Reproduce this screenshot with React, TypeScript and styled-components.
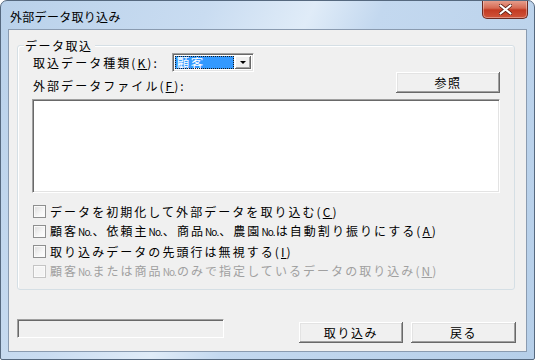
import React from 'react'
import styled, { createGlobalStyle } from 'styled-components'

const Global = createGlobalStyle`
    html, body {
        margin: 0;
        padding: 0;
        background: #ffffff;
    }
    body {
        font-family: "Noto Sans CJK JP", "Liberation Sans", sans-serif;
        font-size: 12px;
    }
`

const Window = styled.div`
    width: 535px;
    height: 360px;
    box-sizing: border-box;
    border: 1px solid #56697f;
    border-radius: 7px 7px 2px 2px;
    background: linear-gradient(115deg, #b9d1ea 0%, #c9dcf1 30%, #e0ecf8 45%, #c3d8ef 55%, #b6cfe9 100%);
    display: flex;
    flex-direction: column;
    overflow: hidden;
`

const TitleBar = styled.div`
    height: 28px;
    display: flex;
    align-items: flex-start;
    justify-content: space-between;
`

const Title = styled.div`
    padding: 8px 0 0 9px;
    font-size: 12px;
    line-height: 16px;
    letter-spacing: 0.3px;
    color: #000;
`

const CloseBtn = styled.div`
    width: 46px;
    height: 19px;
    margin-right: 6px;
    margin-top: -1px;
    box-sizing: border-box;
    border: 1px solid #6b2a22;
    border-top: none;
    border-radius: 0 0 5px 5px;
    background: linear-gradient(180deg, #e8a493 0%, #d66a53 45%, #c33a22 55%, #d0543a 100%);
    box-shadow: inset 0 0 0 1px rgba(255, 255, 255, 0.35);
    display: flex;
    align-items: center;
    justify-content: center;
`

const Client = styled.div`
    flex: 1;
    margin: 0 7px 7px 7px;
    border: 1px solid #8a9bb0;
    background: #f0f0f0;
    display: flex;
    flex-direction: column;
    padding: 0 0 0 8px;
`

const Group = styled.div`
    position: relative;
    margin-top: 15px;
    width: 498px;
    box-sizing: border-box;
    border: 1px solid #d5dfe5;
    border-radius: 3px;
    box-shadow: inset 1px 1px #ffffff;
    padding: 7px 14px 8px 14px;
    display: flex;
    flex-direction: column;
`

const Legend = styled.div`
    position: absolute;
    top: -8px;
    left: 6px;
    padding: 0 2px 0 1px;
    background: #f0f0f0;
    line-height: 15px;
    letter-spacing: 1.5px;
    color: #000;
`

const Label = styled.span<{ $top?: number }>`
    line-height: 15px;
    letter-spacing: 2.05px;
    color: inherit;
    padding-top: ${p => p.$top ?? 0}px;
    white-space: nowrap;
`

const NoMark = styled.span`
    font-size: 10px;
    letter-spacing: -0.9px;
    margin-right: 1px;
`

const KindRow = styled.div`
    display: flex;
    align-items: center;
    height: 19px;
    gap: 13px;
    padding-left: 1px;
    color: #000;
`

const Combo = styled.div`
    width: 82px;
    height: 19px;
    box-sizing: border-box;
    background: #ffffff;
    border-top: 1px solid #a0a0a0;
    border-left: 1px solid #a0a0a0;
    border-right: 1px solid #ffffff;
    border-bottom: 1px solid #ffffff;
    box-shadow: inset 1px 1px #696969, inset -1px -1px #e3e3e3;
    display: flex;
    align-items: stretch;
    padding: 2px 2px 2px 2px;
`

const ComboValue = styled.div`
    flex: 1;
    background: #3399ff;
    color: #ffffff;
    outline: 1px dotted #1b1b1b;
    outline-offset: -1px;
    font-size: 12.5px;
    line-height: 13px;
    letter-spacing: 1.5px;
    padding-left: 2px;
    margin-right: 1px;
`

const ComboButton = styled.div`
    width: 16px;
    background: #f0f0f0;
    box-shadow: inset -1px -1px #696969, inset 1px 1px #ffffff, inset -2px -2px #a0a0a0;
    display: flex;
    align-items: center;
    justify-content: center;
`

const Arrow = styled.div`
    width: 0;
    height: 0;
    border-left: 3px solid transparent;
    border-right: 3px solid transparent;
    border-top: 3px solid #000;
`

const FileRow = styled.div`
    display: flex;
    justify-content: space-between;
    align-items: flex-start;
    height: 21px;
    padding-left: 1px;
    color: #000;
`

const Button = styled.div<{ $w: number }>`
    width: ${p => p.$w}px;
    height: 21px;
    box-sizing: border-box;
    background: #f0f0f0;
    box-shadow: inset -1px -1px #696969, inset 1px 1px #ffffff, inset -2px -2px #a0a0a0, inset 2px 2px #e3e3e3;
    display: flex;
    align-items: center;
    justify-content: center;
    line-height: 15px;
    letter-spacing: 1.6px;
    color: #000;
`

const ListBox = styled.div`
    margin-top: 6px;
    height: 94px;
    box-sizing: border-box;
    background: #ffffff;
    border-top: 1px solid #a0a0a0;
    border-left: 1px solid #a0a0a0;
    border-right: 1px solid #ffffff;
    border-bottom: 1px solid #ffffff;
    box-shadow: inset 1px 1px #696969, inset -1px -1px #e3e3e3;
`

const Checks = styled.div`
    margin-top: 8px;
    display: flex;
    flex-direction: column;
`

const CheckRow = styled.div<{ $disabled?: boolean }>`
    height: 20px;
    display: flex;
    align-items: center;
    gap: 4px;
    padding-left: 1px;
    color: ${p => (p.$disabled ? '#a0a0a0' : '#000')};
`

const Box = styled.div<{ $disabled?: boolean }>`
    width: 13px;
    height: 13px;
    box-sizing: border-box;
    border: 1px solid ${p => (p.$disabled ? '#c4c4c4' : '#8e8f8f')};
    background: ${p => (p.$disabled ? '#f4f4f4' : 'linear-gradient(135deg, #dcdcdc 0%, #f6f6f6 60%, #ffffff 100%)')};
    box-shadow: inset 0 0 0 1px #fafafa;
`

const Footer = styled.div`
    margin-top: auto;
    margin-bottom: 8px;
    display: flex;
    align-items: flex-end;
    padding-right: 10px;
`

const Status = styled.div`
    width: 207px;
    height: 19px;
    box-sizing: border-box;
    border-top: 1px solid #a0a0a0;
    border-left: 1px solid #a0a0a0;
    border-right: 1px solid #ffffff;
    border-bottom: 1px solid #ffffff;
    box-shadow: inset 1px 1px #696969;
    margin-bottom: 5px;
`

const Buttons = styled.div`
    margin-left: auto;
    display: flex;
    gap: 8px;
`

// "No." is drawn narrow, as the dialog font does
const withNo = (text: string) =>
    text.split('No.').map((part, i) => (
        <React.Fragment key={i}>
            {i > 0 && <NoMark>No.</NoMark>}
            {part}
        </React.Fragment>
    ))

const checks = [
    { text: 'データを初期化して外部データを取り込む', key: 'C' },
    { text: '顧客No.、依頼主No.、商品No.、農園No.は自動割り振りにする', key: 'A' },
    { text: '取り込みデータの先頭行は無視する', key: 'I' },
    { text: '顧客No.または商品No.のみで指定しているデータの取り込み', key: 'N', disabled: true },
]

const App: React.FC = () => {
    return (
        <>
            <Global />
            <Window>
                <TitleBar>
                    <Title>外部データ取り込み</Title>
                    <CloseBtn>
                        <svg width="13" height="11" viewBox="0 0 13 11">
                            <path d="M1 1 L12 10 M12 1 L1 10" stroke="#5a1a10" strokeWidth="3.6" strokeLinecap="round" />
                            <path d="M1.5 1.5 L11.5 9.5 M11.5 1.5 L1.5 9.5" stroke="#ffffff" strokeWidth="2.2" strokeLinecap="round" />
                        </svg>
                    </CloseBtn>
                </TitleBar>
                <Client>
                    <Group>
                        <Legend>データ取込</Legend>
                        <KindRow>
                            <Label>取込データ種類(<u>K</u>):</Label>
                            <Combo>
                                <ComboValue>顧客</ComboValue>
                                <ComboButton><Arrow /></ComboButton>
                            </Combo>
                        </KindRow>
                        <FileRow>
                            <Label $top={6}>外部データファイル(<u>F</u>):</Label>
                            <Button $w={104}>参照</Button>
                        </FileRow>
                        <ListBox />
                        <Checks>
                            {checks.map(c => (
                                <CheckRow key={c.key} $disabled={c.disabled}>
                                    <Box $disabled={c.disabled} />
                                    <Label>{withNo(c.text)}(<u>{c.key}</u>)</Label>
                                </CheckRow>
                            ))}
                        </Checks>
                    </Group>
                    <Footer>
                        <Status />
                        <Buttons>
                            <Button $w={104}>取り込み</Button>
                            <Button $w={105}>戻る</Button>
                        </Buttons>
                    </Footer>
                </Client>
            </Window>
        </>
    )
}

export default App
